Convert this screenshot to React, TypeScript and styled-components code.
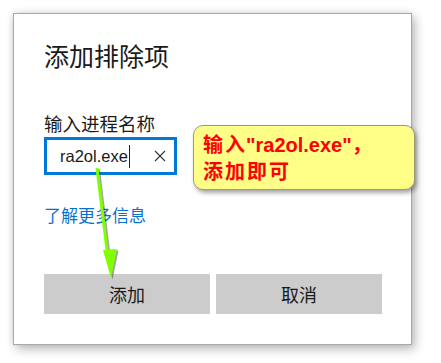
import React from "react";
import styled, { createGlobalStyle } from "styled-components";

const Global = createGlobalStyle`
  html, body { margin: 0; padding: 0; background: #ffffff; }
  body { font-family: "Noto Sans CJK SC", "Noto Sans", sans-serif; }
`;

const Page = styled.div`
  position: relative;
  width: 441px;
  height: 363px;
  padding: 13px 0 0 13px;
  box-sizing: border-box;
  overflow: hidden;
`;

const Dialog = styled.div`
  width: 399px;
  height: 332px;
  box-sizing: border-box;
  background: #ffffff;
  border: 1px solid #a8a8a8;
  box-shadow: 3px 4px 10px rgba(0, 0, 0, 0.28), -1px -1px 6px rgba(0, 0, 0, 0.08);
  padding: 25px 29px 0 30px;
  display: flex;
  flex-direction: column;
`;

const Title = styled.div`
  font-size: 25px;
  line-height: 32px;
  color: #1a1a1a;
  font-weight: 400;
`;

const Label = styled.div`
  margin-top: 40px;
  font-size: 18.5px;
  line-height: 24px;
  color: #1a1a1a;
`;

const InputBox = styled.div`
  margin-top: 2px;
  width: 133px;
  height: 38px;
  box-sizing: border-box;
  border: 3px solid #0078d7;
  display: flex;
  align-items: center;
  padding: 0 8px 0 13px;
`;

const InputText = styled.span`
  font-family: "Liberation Sans", Arial, sans-serif;
  font-size: 16.5px;
  color: #1a1a1a;
  display: flex;
  align-items: center;
`;

const Caret = styled.span`
  display: inline-block;
  width: 1px;
  height: 23px;
  background: #222;
  margin-left: 1px;
`;

const ClearIcon = styled.svg`
  margin-left: auto;
  width: 12px;
  height: 12px;
`;

const Link = styled.div`
  margin-top: 28px;
  font-size: 17px;
  line-height: 24px;
  color: #0a6fcf;
`;

const Buttons = styled.div`
  margin-top: 47px;
  display: flex;
  gap: 6px;
`;

const Button = styled.div`
  width: 166px;
  height: 40px;
  background: #cccccc;
  display: flex;
  align-items: center;
  justify-content: center;
  font-size: 18px;
  color: #1a1a1a;
`;

const Callout = styled.div`
  position: absolute;
  left: 193px;
  top: 125px;
  width: 222px;
  height: 65px;
  box-sizing: border-box;
  background: #ffff88;
  border: 1px solid #9a9a7a;
  border-radius: 10px;
  box-shadow: 2px 3px 4px rgba(0, 0, 0, 0.35);
  padding: 5px 0 0 9px;
  color: #ff0000;
  font-weight: 700;
  font-size: 20px;
  line-height: 25px;
  letter-spacing: 2px;
`;

const CalloutLatin = styled.span`
  font-family: "Liberation Sans", Arial, sans-serif;
  letter-spacing: 0;
  margin-left: -1px;
`;

const Arrow = styled.svg`
  position: absolute;
  left: 0;
  top: 0;
  width: 441px;
  height: 363px;
  pointer-events: none;
`;

export default function App() {
  return (
    <>
      <Global />
      <Page>
        <Dialog>
          <Title>添加排除项</Title>
          <Label>输入进程名称</Label>
          <InputBox>
            <InputText>
              ra2ol.exe
              <Caret />
            </InputText>
            <ClearIcon viewBox="0 0 12 12">
              <path d="M1 1 L11 11 M11 1 L1 11" stroke="#333" strokeWidth="1.1" fill="none" />
            </ClearIcon>
          </InputBox>
          <Link>了解更多信息</Link>
          <Buttons>
            <Button>添加</Button>
            <Button>取消</Button>
          </Buttons>
        </Dialog>
        <Callout>
          输入<CalloutLatin>"ra2ol.exe"</CalloutLatin>，
          <br />
          添加即可
        </Callout>
        <Arrow viewBox="0 0 441 363">
          <g transform="translate(1.5,1.5)" opacity="0.45">
            <line x1="97" y1="168" x2="108" y2="258" stroke="#333" strokeWidth="3" />
            <polygon points="103,250 117,249 111,278" fill="#333" />
          </g>
          <line x1="97" y1="168" x2="108" y2="258" stroke="#7fff00" strokeWidth="3" />
          <polygon points="103,250 117,249 111,278" fill="#7fff00" />
        </Arrow>
      </Page>
    </>
  );
}
